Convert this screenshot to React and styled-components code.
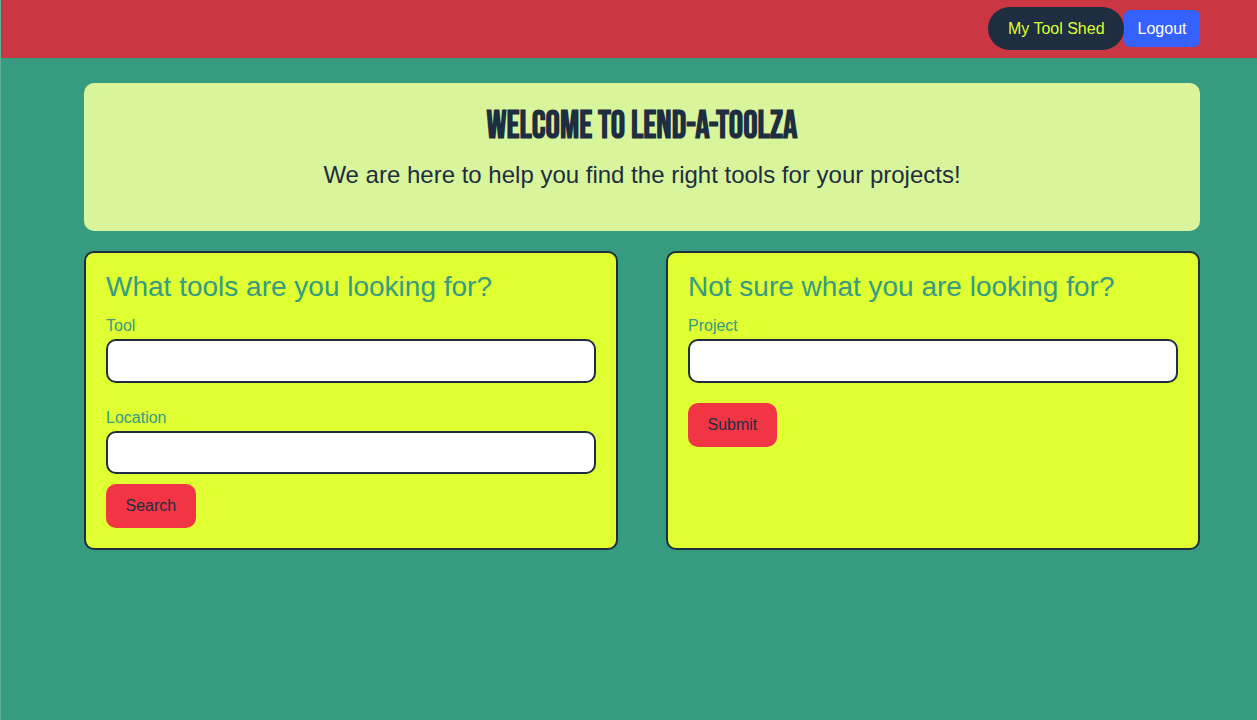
import styled, { createGlobalStyle } from "styled-components";

const GlobalStyle = createGlobalStyle`
	html, body {
		margin: 0;
		padding: 0;
		background: #369b7f;
		font-family: "Liberation Sans", Arial, Helvetica, sans-serif;
	}
	#root {
		min-height: 100vh;
		background: #369b7f;
		border-left: 1px solid #5fae96;
		box-sizing: border-box;
	}
`;

function App() {
	function handleSubmit(event) {
		event.preventDefault();
	}

	return (
		<>
			<GlobalStyle />
			<Header>
				<Nav>
					<ShedButton type="button">My Tool Shed</ShedButton>
					<LogoutButton type="button">Logout</LogoutButton>
				</Nav>
			</Header>
			<Main>
				<Hero>
					<HeroTitle>Welcome to Lend-A-Toolza</HeroTitle>
					<HeroText>
						We are here to help you find the right tools for your projects!
					</HeroText>
				</Hero>
				<CardGrid>
					<Card onSubmit={handleSubmit}>
						<CardTitle>What tools are you looking for?</CardTitle>
						<Label htmlFor="tool">Tool</Label>
						<Input id="tool" name="tool" type="text" />
						<Label htmlFor="location" $spaced>
							Location
						</Label>
						<Input id="location" name="location" type="text" />
						<ActionButton type="submit" $gap={10}>
							Search
						</ActionButton>
					</Card>
					<Card onSubmit={handleSubmit}>
						<CardTitle>Not sure what you are looking for?</CardTitle>
						<Label htmlFor="project">Project</Label>
						<Input id="project" name="project" type="text" />
						<ActionButton type="submit" $gap={20}>
							Submit
						</ActionButton>
					</Card>
				</CardGrid>
			</Main>
		</>
	);
}

const Header = styled.header`
	height: 58px;
	background: #cb3643;
	display: flex;
	justify-content: flex-end;
	align-items: center;
	padding-right: 57px;
	box-sizing: border-box;
`;

const Nav = styled.nav`
	display: flex;
	align-items: center;
`;

const ShedButton = styled.button`
	height: 43px;
	padding: 0 19.5px;
	margin-top: -1px;
	border: none;
	border-radius: 22px;
	background: #1e2d3f;
	color: #dfff33;
	font-family: "Liberation Sans", Arial, sans-serif;
	font-size: 16px;
	cursor: pointer;
`;

const LogoutButton = styled.button`
	height: 37px;
	padding: 0 13.5px;
	margin-top: -1px;
	border: none;
	border-radius: 6px;
	background: #3562ff;
	color: #ffffff;
	font-family: "Liberation Sans", Arial, sans-serif;
	font-size: 16px;
	cursor: pointer;
`;

const Main = styled.main`
	width: 1116px;
	margin-left: 83px;
	padding-top: 25px;
	display: flex;
	flex-direction: column;
	gap: 20px;
`;

const Hero = styled.section`
	height: 148px;
	box-sizing: border-box;
	background: #d8f59c;
	border-radius: 10px;
	display: flex;
	flex-direction: column;
	align-items: center;
	padding-top: 24px;
	color: #1e2d3f;
`;

const HeroTitle = styled.h1`
	margin: 0;
	font-family: "Bebas Neue", "Liberation Sans Narrow", "DejaVu Sans Condensed",
		sans-serif;
	font-weight: 700;
	font-size: 39px;
	line-height: 40px;
	text-transform: uppercase;
	transform: scaleX(0.92);
`;

const HeroText = styled.p`
	margin: 14px 0 0;
	font-size: 24px;
	line-height: 28px;
`;

const CardGrid = styled.div`
	display: grid;
	grid-template-columns: 1fr 1fr;
	gap: 48px;
`;

const Card = styled.form`
	display: flex;
	flex-direction: column;
	align-items: flex-start;
	height: 299px;
	box-sizing: border-box;
	padding: 20px;
	background: #dfff33;
	border: 2px solid #1e2d3f;
	border-radius: 10px;
`;

const CardTitle = styled.h2`
	margin: 0 0 16px;
	font-weight: 400;
	font-size: 28px;
	line-height: 28px;
	color: #369b7f;
`;

const Label = styled.label`
	margin-top: ${(props) => (props.$spaced ? "26px" : "0")};
	margin-bottom: 4px;
	font-size: 16px;
	line-height: 18px;
	color: #369b7f;
`;

const Input = styled.input`
	width: 100%;
	height: 44px;
	box-sizing: border-box;
	border: 2px solid #1e2d3f;
	border-radius: 10px;
	background: #ffffff;
	font-size: 16px;
	padding: 0 10px;
`;

const ActionButton = styled.button`
	margin-top: ${(props) => props.$gap}px;
	height: 44px;
	padding: 0 19.5px;
	border: none;
	border-radius: 10px;
	background: #f13545;
	color: #1e2d3f;
	font-family: "Liberation Sans", Arial, sans-serif;
	font-size: 16px;
	cursor: pointer;
`;

export default App;
